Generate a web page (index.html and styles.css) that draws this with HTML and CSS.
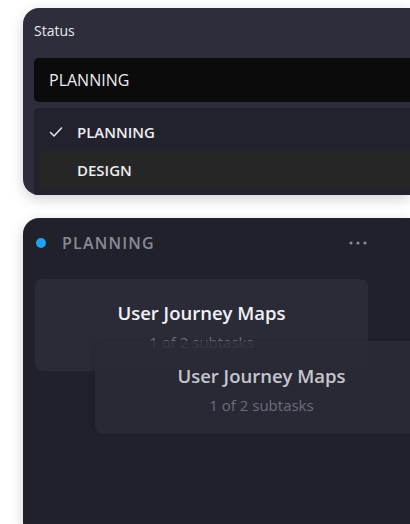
FILE: index.html
```html
<!DOCTYPE html>
<html lang="en">
<head>
    <meta charset="UTF-8">
    <meta name="viewport" content="width=device-width, initial-scale=1.0">
    <title>Board</title>
    <link rel="stylesheet" href="styles.css">
</head>
<body>

    <!-- Status picker -->
    <div class="panel">
        <div class="panel-label">Status</div>
        <div class="select">PLANNING</div>
        <div class="options">
            <div class="option">
                <svg class="check" width="14" height="12" viewBox="0 0 14 12">
                    <path d="M1.5 6.5 L5 10 L12.5 2" fill="none" stroke="#e4e4ea" stroke-width="1.5" stroke-linecap="round" stroke-linejoin="round"/>
                </svg>
                <span>PLANNING</span>
            </div>
            <div class="option active">
                <span>DESIGN</span>
            </div>
        </div>
    </div>

    <!-- Board column -->
    <div class="column">
        <div class="column-head">
            <span class="dot"></span>
            <span class="column-title">PLANNING</span>
            <svg class="more" width="18" height="4" viewBox="0 0 18 4">
                <circle cx="2" cy="2" r="1.6" fill="#8a8a96"/>
                <circle cx="9" cy="2" r="1.6" fill="#8a8a96"/>
                <circle cx="16" cy="2" r="1.6" fill="#8a8a96"/>
            </svg>
        </div>

        <div class="task">
            <div class="task-title">User Journey Maps</div>
            <div class="task-sub">1 of 2 subtasks</div>
        </div>

        <!-- card being dragged -->
        <div class="task drag">
            <div class="task-title">User Journey Maps</div>
            <div class="task-sub">1 of 2 subtasks</div>
        </div>
    </div>

</body>
</html>
```

FILE: styles.css
```css
body {
    margin: 0;
    background-color: #ffffff;
    font-family: "Segoe UI", "Open Sans", "Noto Sans", sans-serif;
    overflow: hidden;
    padding: 8px 0 0 23px;
}
.panel {
    background-color: #2d2d3b;
    border-radius: 16px;
    width: 387px;
    height: 187px;
    overflow: hidden;
    box-shadow: 0 4px 14px rgba(0, 0, 0, 0.18);
    padding: 12px 0 0 11px;
    box-sizing: border-box;
    border-top-right-radius: 0;
    border-bottom-right-radius: 0;
}
.panel-label {
    color: #e8e8ee;
    font-size: 14px;
    line-height: 22px;
}
.select {
    margin-top: 16px;
    height: 44px;
    background-color: #0b0b0b;
    border-radius: 5px 0 0 5px;
    color: #ececf0;
    font-size: 16px;
    line-height: 44px;
    padding-left: 15px;
}
.options {
    margin-top: 6px;
    background-color: #22222e;
    border-radius: 5px 0 0 5px;
    padding: 5px 0 10px 5px;
}
.option {
    display: flex;
    align-items: center;
    height: 38px;
    color: #ececf0;
    font-size: 15px;
    font-weight: 600;
    padding-left: 38px;
    position: relative;
}
.option .check {
    position: absolute;
    left: 10px;
    top: 13px;
}
.option.active {
    background-color: #262626;
    border-radius: 4px 0 0 4px;
}
.column {
    margin-top: 23px;
    background-color: #21212c;
    border-radius: 16px 0 0 16px;
    width: 387px;
    height: 320px;
    padding: 13px 0 0 12px;
    box-sizing: border-box;
    position: relative;
    overflow: hidden;
    box-shadow: 0 4px 14px rgba(0, 0, 0, 0.18);
}
.column-head {
    display: flex;
    align-items: center;
    height: 24px;
    width: 332px;
}
.dot {
    width: 10px;
    height: 10px;
    border-radius: 50%;
    background-color: #1da1f2;
    margin-left: 1px;
}
.column-title {
    margin-left: 16px;
    color: #8a8a96;
    font-size: 16px;
    font-weight: 600;
    letter-spacing: 1.2px;
    flex: 1;
}
.task {
    margin-top: 24px;
    width: 333px;
    height: 92px;
    background-color: #2b2b37;
    border-radius: 8px;
    text-align: center;
    padding-top: 21px;
    box-sizing: border-box;
}
.task-title {
    color: #f2f2f6;
    font-size: 18.5px;
    font-weight: 600;
    line-height: 26px;
}
.task-sub {
    color: #6c6c7a;
    font-size: 15px;
    line-height: 20px;
    margin-top: 6px;
}
.drag {
    position: absolute;
    left: 72px;
    top: 123px;
    margin-top: 0;
    height: 93px;
    padding-top: 22px;
    background-color: rgba(43, 43, 55, 0.82);
    box-shadow: -2px 0 4px rgba(0, 0, 0, 0.12);
}
.drag .task-title {
    color: #c6c6ce;
}
```
